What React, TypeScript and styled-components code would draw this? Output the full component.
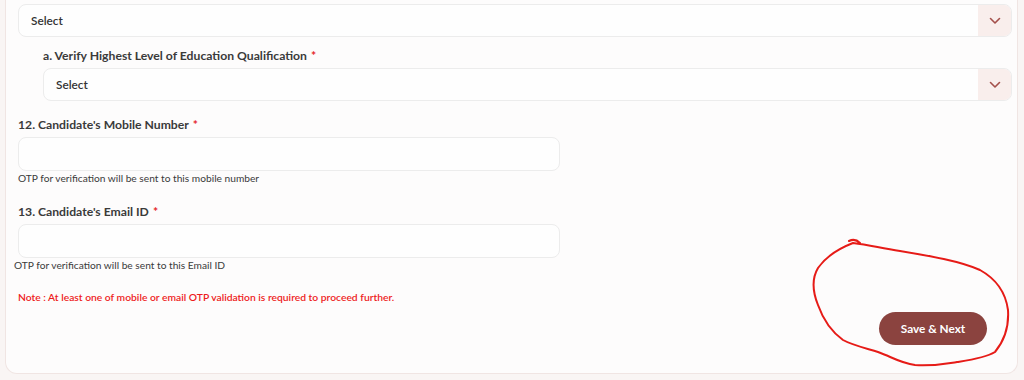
import React from 'react';
import styled, { createGlobalStyle } from 'styled-components';

const GlobalStyle = createGlobalStyle`
  html, body {
    margin: 0;
    padding: 0;
    background: #f9f5f4;
  }
  * { box-sizing: border-box; }
`;

const Page = styled.div`
  position: relative;
  width: 1024px;
  height: 380px;
  padding: 0 6px 6px 5px;
  font-family: Lato, "Noto Sans", sans-serif;
  color: #333;
  overflow: hidden;
`;

const Card = styled.div`
  height: 100%;
  background: #fdfcfc;
  border: 1px solid #f0e5e3;
  border-top: none;
  border-radius: 0 0 12px 12px;
  padding: 4px 5px 0 12px;
  display: flex;
  flex-direction: column;
`;

const Field = styled.div<{ $indent?: number; $mt?: number }>`
  display: flex;
  flex-direction: column;
  margin-left: ${({ $indent }) => $indent || 0}px;
  margin-top: ${({ $mt }) => $mt || 0}px;
`;

const Label = styled.label`
  font-size: 12.2px;
  font-weight: 700;
  color: #3a3a3a;
  line-height: 16px;
  margin-bottom: 4px;
  span {
    color: #e5242a;
    margin-left: 4px;
  }
`;

const SelectBox = styled.div`
  display: flex;
  height: 33px;
  border: 1px solid #ececec;
  border-radius: 8px;
  background: #fefefe;
  overflow: hidden;
`;

const SelectText = styled.div`
  flex: 1;
  display: flex;
  align-items: center;
  padding-left: 12px;
  font-size: 11.8px;
  font-weight: 600;
  color: #333;
`;

const Chevron = styled.div`
  width: 33px;
  display: grid;
  place-items: center;
  background: #f9eeec;
`;

const Input = styled.div`
  width: 542px;
  height: 34px;
  border: 1px solid #ececec;
  border-radius: 8px;
  background: #fefefe;
`;

const Help = styled.div<{ $shift?: number }>`
  font-size: 10.2px;
  color: #3a3a3a;
  margin-top: 1px;
  margin-left: ${({ $shift }) => $shift || 0}px;
`;

const Note = styled.div`
  font-size: 10.3px;
  font-weight: 600;
  color: #ee1c1c;
  margin-top: 20px;
`;

const Footer = styled.div`
  display: flex;
  justify-content: flex-end;
  padding-right: 25px;
  margin-top: 9px;
`;

const SaveButton = styled.button`
  width: 108px;
  height: 33px;
  border: none;
  border-radius: 17px;
  background: #8b433f;
  color: #fff;
  font-family: Lato, "Noto Sans", sans-serif;
  font-size: 11.8px;
  font-weight: 700;
  cursor: pointer;
`;

const Scribble = styled.svg`
  position: absolute;
  left: 0;
  top: 0;
  pointer-events: none;
`;

const Select = () => (
  <SelectBox>
    <SelectText>Select</SelectText>
    <Chevron>
      <svg width="12" height="8" viewBox="0 0 12 8">
        <path d="M1.5 1.5 L6 6 L10.5 1.5" fill="none" stroke="#a4504b" strokeWidth="1.6" strokeLinecap="round" strokeLinejoin="round" />
      </svg>
    </Chevron>
  </SelectBox>
);

const App = () => {
  return (
    <>
      <GlobalStyle />
      <Page>
        <Card>
          <Field>
            <Select />
          </Field>
          <Field $indent={25} $mt={11}>
            <Label>a. Verify Highest Level of Education Qualification<span>*</span></Label>
            <Select />
          </Field>
          <Field $mt={16}>
            <Label>12. Candidate's Mobile Number<span>*</span></Label>
            <Input />
            <Help>OTP for verification will be sent to this mobile number</Help>
          </Field>
          <Field $mt={20}>
            <Label>13. Candidate's Email ID<span>*</span></Label>
            <Input />
            <Help $shift={-4}>OTP for verification will be sent to this Email ID</Help>
          </Field>
          <Note>Note : At least one of mobile or email OTP validation is required to proceed further.</Note>
          <Footer>
            <SaveButton>Save &amp; Next</SaveButton>
          </Footer>
        </Card>
        <Scribble width="1024" height="380" viewBox="0 0 1024 380">
          <path
            d="M853 243 C870 245 880 248 900 251 C930 256 960 261 980 270 C998 280 1006 295 1008 310 C1009 325 1005 340 995 352 C985 358 970 360 957 362 C945 364 935 366 915 365 C900 363 892 357 878 352 C865 348 852 345 843 340 C832 332 824 322 818 305 C812 290 812 278 818 268 C825 258 835 250 853 243 M849 241 C853 239 857 240 860 243"
            fill="none"
            stroke="#e61b17"
            strokeWidth="2"
            strokeLinecap="round"
            strokeLinejoin="round"
          />
        </Scribble>
      </Page>
    </>
  );
};

export default App;
